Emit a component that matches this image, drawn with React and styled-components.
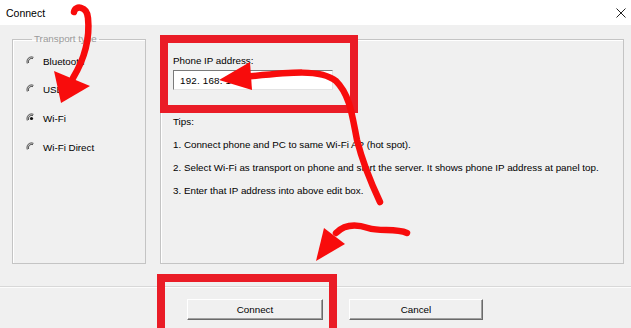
import React from "react";
import styled, { createGlobalStyle } from "styled-components";

const GlobalStyle = createGlobalStyle`
  html, body {
    margin: 0;
    padding: 0;
    background: #f0f0f0;
  }
  body {
    font-family: "Liberation Sans", Arial, sans-serif;
    font-size: 9.8px;
    color: #000;
  }
`;

const Window = styled.div`
  position: relative;
  width: 631px;
  height: 328px;
  display: flex;
  flex-direction: column;
  overflow: hidden;
  background: #f0f0f0;
`;

const TitleBar = styled.div`
  height: 25px;
  flex-shrink: 0;
  background: #fff;
  display: flex;
  align-items: center;
  justify-content: space-between;
  padding: 0 4px 0 6px;
  font-size: 10.5px;
`;

const Body = styled.div`
  flex: 1;
  display: flex;
  flex-direction: column;
`;

const GroupRow = styled.div`
  display: flex;
  gap: 14px;
  padding: 8px 7px 0 12px;
`;

const GroupBox = styled.fieldset`
  box-sizing: border-box;
  margin: 0;
  padding: 0 0 0 ${(p) => p.$pad}px;
  min-width: 0;
  width: ${(p) => (p.$grow ? "auto" : `${p.$w}px`)};
  flex: ${(p) => (p.$grow ? 1 : "none")};
  height: 231px;
  border: 1px solid #c4c4c4;
  box-shadow: inset 1px 1px 0 #fff;
  display: flex;
  flex-direction: column;
`;

const Legend = styled.legend`
  margin-left: ${(p) => p.$offset}px;
  padding: 0 2px;
  line-height: 12px;
  color: #9a9a9a;
`;

const RadioList = styled.div`
  display: flex;
  flex-direction: column;
  gap: 12.7px;
  margin-top: 8px;
`;

const RadioRow = styled.label`
  display: flex;
  align-items: center;
  gap: 6px;
  height: 16px;
`;

const Caption = styled.div`
  height: 14px;
  line-height: 14px;
  margin-top: ${(p) => p.$top || 0}px;
`;

const EditBox = styled.div`
  box-sizing: border-box;
  width: 160px;
  height: 20px;
  margin-top: 2px;
  padding-left: 6px;
  display: flex;
  align-items: center;
  background: #fff;
  border-top: 1px solid #7a7a7a;
  border-left: 1px solid #7a7a7a;
  border-right: 1px solid #e3e3e3;
  border-bottom: 1px solid #e3e3e3;
  letter-spacing: 0.2px;
`;

const TipLine = styled.div`
  height: 14px;
  line-height: 14px;
  margin-top: 9px;
  white-space: nowrap;
`;

const Separator = styled.div`
  margin-top: 22px;
  height: 0;
  border-top: 1px solid #d8d8d8;
  border-bottom: 1px solid #fcfcfc;
`;

const ButtonRow = styled.div`
  display: flex;
  gap: 26px;
  padding-left: 187px;
  margin-top: 11px;
`;

const Button = styled.button`
  box-sizing: border-box;
  width: ${(p) => p.$w}px;
  height: 21px;
  padding: 0;
  font: inherit;
  color: #000;
  background: #f0f0f0;
  border: 1px solid;
  border-color: #fff #6a6a6a #6a6a6a #fff;
  box-shadow: inset -1px -1px 0 #a0a0a0;
`;

const Overlay = styled.svg`
  position: absolute;
  left: 0;
  top: 0;
  pointer-events: none;
`;

const Highlight = styled.div`
  position: absolute;
  box-sizing: border-box;
  border: 8px solid #ea1c26;
  left: ${(p) => p.$x}px;
  top: ${(p) => p.$y}px;
  width: ${(p) => p.$w}px;
  height: ${(p) => p.$h}px;
  pointer-events: none;
`;

function RadioIcon({ checked }) {
  return (
    <svg width="11" height="11" viewBox="0 0 11 11">
      <path d="M1.5 7.5 A4.5 4.5 0 0 1 7.5 1.5" fill="none" stroke="#6e6e6e" strokeWidth="1.2" />
      <path d="M2.6 7 A3.4 3.4 0 0 1 7 2.6" fill="none" stroke="#2a2a2a" strokeWidth="0.8" />
      {checked && <circle cx="5.5" cy="5.5" r="1.6" fill="#111" />}
    </svg>
  );
}

function CloseIcon() {
  return (
    <svg width="12" height="12" viewBox="0 0 12 12">
      <path d="M1.5 1.5 L10.5 10.5 M10.5 1.5 L1.5 10.5" stroke="#222" strokeWidth="1" />
    </svg>
  );
}

const transports = [
  { id: "bt", label: "Bluetooth" },
  { id: "usb", label: "USB" },
  { id: "wifi", label: "Wi-Fi", checked: true },
  { id: "wfd", label: "Wi-Fi Direct" },
];

const tips = [
  "1. Connect phone and PC to same Wi-Fi AP (hot spot).",
  "2. Select Wi-Fi as transport on phone and start the server. It shows phone IP address at panel top.",
  "3. Enter that IP address into above edit box.",
];

export default function App() {
  return (
    <>
      <GlobalStyle />
      <Window>
        <TitleBar>
          <span>Connect</span>
          <CloseIcon />
        </TitleBar>
        <Body>
          <GroupRow>
            <GroupBox $w={134} $pad={13}>
              <Legend $offset={6}>Transport type</Legend>
              <RadioList>
                {transports.map((t) => (
                  <RadioRow key={t.id}>
                    <RadioIcon checked={t.checked} />
                    {t.label}
                  </RadioRow>
                ))}
              </RadioList>
            </GroupBox>
            <GroupBox $grow $pad={12}>
              <Legend $offset={6}>Details</Legend>
              <Caption $top={9}>Phone IP address:</Caption>
              <EditBox>192. 168. 1</EditBox>
              <Caption $top={25}>Tips:</Caption>
              {tips.map((t) => (
                <TipLine key={t}>{t}</TipLine>
              ))}
            </GroupBox>
          </GroupRow>
          <Separator />
          <ButtonRow>
            <Button $w={136}>Connect</Button>
            <Button $w={134}>Cancel</Button>
          </ButtonRow>
        </Body>

        <Highlight $x={160} $y={35} $w={198} $h={78} />
        <Highlight $x={157} $y={274} $w={180} $h={62} />

        <Overlay width="631" height="328" viewBox="0 0 631 328">
          <g fill="none" stroke="#f80c0c" strokeWidth="6.5" strokeLinecap="round">
            <path d="M74 12 C75 5 87 6 88 18 C90 38 85 58 73 78" />
            <path d="M380 202 C372 185 362 160 357 140 C352 115 350 95 336 81 C321 69 292 72 244 77" />
            <path d="M407 233 C395 228 380 232 368 228 C356 224 345 224 336 233" />
          </g>
          <g fill="#f80c0c">
            <polygon points="61,103 54,71 90,86" />
            <polygon points="219,80 250,62 252,90" />
            <polygon points="316,261 324,228 345,244" />
          </g>
        </Overlay>
      </Window>
    </>
  );
}
